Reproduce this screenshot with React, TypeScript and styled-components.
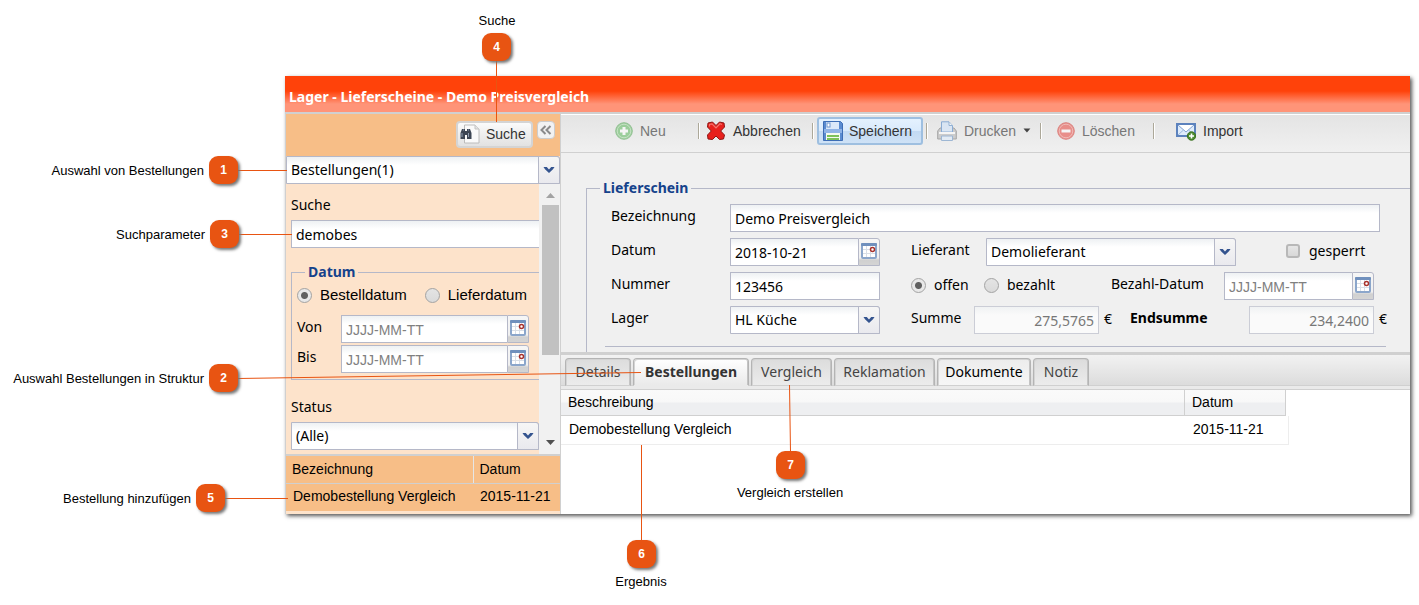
import React from "react";
import styled, { createGlobalStyle, css } from "styled-components";

const ui = `"Noto Sans", "Open Sans", sans-serif`;
const arial = `"Liberation Sans", Arial, sans-serif`;
const line = "#b5b8c8";
const navy = "#15428b";
const accent = "#e85412";

const GlobalStyle = createGlobalStyle`
  *, *::before, *::after { box-sizing: border-box; }
  body { margin: 0; background: #fff; color: #000; font: 14px/18px ${ui}; }
  button, input, select { font: inherit; color: inherit; margin: 0; }
`;

const Page = styled.div`
  position: relative;
  padding: 76px 9px 90px 285px;
`;

const Window = styled.main`
  display: flex;
  flex-direction: column;
  background: #fff;
  box-shadow: 2px 2px 4px #555;
`;

const TitleBar = styled.h1`
  margin: 0;
  height: 38px;
  padding: 11px 4px 0;
  font: bold 14px/20px ${ui};
  color: #fff;
  border-bottom: 2px solid #d0d0d0;
  background: linear-gradient(#ff420a 0, #ff420a 15px, #ff9478 28px, #ff9478 100%);
`;

const Body = styled.div`
  display: flex;
  min-height: 400px;
`;

const Sidebar = styled.aside`
  width: 276px;
  flex: none;
  display: flex;
  flex-direction: column;
  border-left: 1px solid #d0d0d0;
  border-right: 1px solid #d0d0d0;
  background: #fde3cb;
`;

const SideHeader = styled.div`
  height: 42px;
  flex: none;
  display: flex;
  justify-content: flex-end;
  align-items: flex-start;
  gap: 4px;
  padding: 7px 5px 0;
  background: #f7be87;
`;

const SearchButton = styled.button`
  height: 27px;
  width: 77px;
  display: flex;
  align-items: center;
  gap: 6px;
  padding: 0 2px 2px;
  border: 2px solid #d4d4d4;
  border-radius: 4px;
  font: 14px/18px ${arial};
  color: #333;
  background: linear-gradient(#fbfbfb, #eee 50%, #e2e2e2);
`;

const CollapseButton = styled.button`
  width: 18px;
  height: 18px;
  display: grid;
  place-items: center;
  padding: 0;
  border: 1px solid #ccc;
  border-radius: 4px;
  background: #f2f2f2;
`;

const ComboBox = styled.div<{ $w?: string }>`
  display: grid;
  width: ${(p) => p.$w ?? "100%"};
  height: 28px;
  flex: none;
`;

const ComboSelect = styled.select`
  grid-area: 1 / 1;
  appearance: none;
  width: 100%;
  min-width: 0;
  height: 28px;
  padding: 0 24px 0 4px;
  border: 1px solid ${line};
  border-radius: 0 3px 0 0;
  line-height: 18px;
  background: linear-gradient(#eef1f3, #fff 8px);
`;

const ComboArrow = styled.span`
  grid-area: 1 / 1;
  justify-self: end;
  width: 22px;
  height: 28px;
  display: grid;
  place-items: center;
  border: 1px solid ${line};
  border-radius: 0 3px 0 0;
  background: linear-gradient(#f6f6f6, #e9e9ee);
  pointer-events: none;
`;

const ScrollPane = styled.div`
  display: flex;
  height: 272px;
  flex: none;
  border-bottom: 2px solid #d0d0d0;
`;

const SearchForm = styled.form`
  flex: 1;
  min-width: 0;
  overflow: hidden;
  padding: 12px 0 0 5px;
  display: flex;
  flex-direction: column;
`;

const SideLabel = styled.label`
  display: block;
  height: 24px;
  flex: none;
`;

const TextInput = styled.input<{ $w?: string; $right?: boolean }>`
  width: ${(p) => p.$w ?? "100%"};
  min-width: 0;
  height: 28px;
  flex: none;
  padding: 1px 4px 0;
  border: 1px solid ${line};
  outline: none;
  background: linear-gradient(#eef1f3, #fff 8px);
  text-align: ${(p) => (p.$right ? "right" : "left")};
  &::placeholder { color: #808080; opacity: 1; font-family: ${arial}; }
  &:disabled {
    color: #777;
    border-color: #cbcdd6;
    background: linear-gradient(#f0f2f3, #fafafa 8px);
  }
`;

const BleedInput = styled(TextInput)`
  border-right: 0;
`;

const SideFieldset = styled.fieldset`
  margin: 15px 0 0;
  padding: 4px 10px 0 5px;
  min-width: 0;
  height: 117px;
  flex: none;
  border: 1px solid ${line};
  border-right: 0;
`;

const Legend = styled.legend`
  margin-left: 8px;
  padding: 0 3px;
  font-weight: bold;
  line-height: 18px;
  color: ${navy};
`;

const RadioRow = styled.div`
  display: flex;
  gap: 18px;
  height: 30px;
`;

const Choice = styled.label<{ $gap?: number }>`
  display: flex;
  align-items: center;
  gap: ${(p) => p.$gap ?? 8}px;
  height: 20px;
`;

const SideChoice = styled(Choice)`
  font-family: ${arial};
  font-size: 15px;
`;

const Radio = styled.input`
  appearance: none;
  width: 15px;
  height: 15px;
  flex: none;
  border: 1px solid #a3a3a3;
  border-radius: 50%;
  background: linear-gradient(#e4e4e4, #dadada);
  &:checked {
    background: radial-gradient(circle, #606060 0, #606060 3px, #e8e8e8 4px);
  }
`;

const Check = styled.input`
  appearance: none;
  width: 14px;
  height: 14px;
  border: 2px solid #b8b8b8;
  border-radius: 3px;
  background: linear-gradient(#e6e6e6, #d8d8d8);
`;

const SideDateRow = styled.div`
  display: flex;
  height: 30px;
`;

const SideDateLabel = styled.label`
  width: 44px;
  padding-top: 3px;
`;

const DateBox = styled.div<{ $w?: string }>`
  display: flex;
  width: ${(p) => p.$w ?? "auto"};
  flex: ${(p) => (p.$w ? "none" : "1")};
  min-width: 0;
  input { flex: 1; border-right: 0; }
`;

const DateButton = styled.button`
  width: 22px;
  height: 28px;
  flex: none;
  display: grid;
  justify-items: center;
  align-content: start;
  padding: 4px 0 0;
  border: 1px solid ${line};
  border-radius: 0 3px 0 0;
  background: linear-gradient(#f6f6f6 0, #f0f0f0 19px, #d0d0d0 21px, #d4d4d4 100%);
`;

const StatusField = styled.div`
  margin-top: 18px;
`;

const Scrollbar = styled.div`
  width: 21px;
  flex: none;
  display: flex;
  flex-direction: column;
  align-items: center;
  justify-content: space-between;
  padding: 9px 0 9px 1px;
  background: #f1f1f1;
`;

const ScrollThumb = styled.div`
  width: 17px;
  height: 150px;
  margin: 7px 0 auto;
  background: #c1c1c1;
`;

const ResultTable = styled.table`
  width: 100%;
  border-collapse: collapse;
  table-layout: fixed;
  font: 14px/18px ${arial};
  background: #f7be87;
  th, td { text-align: left; font-weight: normal; padding: 0 6px; }
  th { height: 27px; border-bottom: 1px solid #d0d0d0; }
  th:first-child { width: 187px; border-right: 1px solid #e6e6e6; }
  td { height: 28px; padding: 0 7px 2px; }
`;

const Content = styled.section`
  flex: 1;
  min-width: 0;
  display: flex;
  flex-direction: column;
`;

const Toolbar = styled.div`
  height: 39px;
  flex: none;
  display: flex;
  align-items: center;
  padding: 0 0 6px 48px;
  border-top: 1px solid #fff;
  border-bottom: 1px solid #d0d0d0;
  background: linear-gradient(#e4e4e4, #f0f0f0);
`;

const ToolButton = styled.button<{ $w: number; $active?: boolean }>`
  width: ${(p) => p.$w}px;
  height: 28px;
  flex: none;
  display: flex;
  align-items: center;
  gap: 7px;
  padding: 0 5px;
  border: 1px solid transparent;
  border-radius: 3px;
  background: none;
  font: 14px/18px ${arial};
  color: #333;
  white-space: nowrap;
  &:disabled { color: #777; }
  ${(p) =>
    p.$active &&
    css`
      gap: 6px;
      border: 2px solid #9ebfe0;
      padding: 0 4px;
      background: linear-gradient(#e4f1fe 0, #d9eafc 50%, #c3daf3 51%, #cfe2f6 100%);
    `}
`;

const Faded = styled.span`
  display: flex;
  opacity: 0.55;
`;

const Separator = styled.span<{ $before?: number; $after?: number }>`
  width: 2px;
  height: 16px;
  flex: none;
  margin: 0 ${(p) => p.$after ?? 3}px 0 ${(p) => p.$before ?? 3}px;
  border-left: 1px solid #aca899;
  border-right: 1px solid #fff;
`;

const FormPane = styled.form`
  height: 202px;
  flex: none;
  overflow: hidden;
  padding: 26px 0 0 25px;
  border-bottom: 3px solid #d0d0d0;
  background: #f0f0f0;
`;

const MainFieldset = styled.fieldset`
  margin: 0;
  min-width: 0;
  padding: 7px 24px 12px 18px;
  border: 1px solid ${line};
  border-right: 0;
  border-bottom: 0;
`;

const MainLegend = styled(Legend)`
  margin-left: -5px;
`;

const FormRow = styled.div`
  display: flex;
  height: 34px;
  padding: 0 6px;
`;

const FieldLabel = styled.label<{ $w: number; $bold?: boolean }>`
  width: ${(p) => p.$w}px;
  flex: none;
  padding-top: 3px;
  font-weight: ${(p) => (p.$bold ? "bold" : "normal")};
`;

const Gap = styled.span<{ $w: number }>`
  width: ${(p) => p.$w}px;
  flex: none;
`;

const Unit = styled.span<{ $w: number }>`
  width: ${(p) => p.$w}px;
  flex: none;
  padding: 4px 0 0 5px;
`;

const InlineChoice = styled.div<{ $w: number }>`
  width: ${(p) => p.$w}px;
  flex: none;
  padding-top: 3px;
`;

const Divider = styled.hr`
  margin: 6px 0 0;
  border: 0;
  border-top: 1px solid ${line};
`;

const TabStrip = styled.div`
  height: 35px;
  flex: none;
  display: flex;
  gap: 2px;
  padding: 3px 0 0 4px;
  border-bottom: 1px solid #d0d0d0;
  background: linear-gradient(#f2f2f2 0, #dcdcdc 30px, #d0d0d0 30px, #d0d0d0 31px, #eaeaea 31px);
`;

const Tab = styled.button<{ $w: number; $state?: "active" | "hot" }>`
  width: ${(p) => p.$w}px;
  height: 28px;
  padding: 0 0 1px;
  border: 1px solid #b4b4b4;
  border-bottom: 1px solid #d0d0d0;
  border-radius: 4px 4px 0 0;
  color: #444;
  background: linear-gradient(#dcdcdc, #ececec);
  box-shadow: inset -1px 0 #c4c4c4, inset 1px 1px #d4d4d4;
  ${(p) =>
    p.$state === "hot" &&
    css`
      color: #000;
      background: linear-gradient(#ececec, #f6f6f6);
    `}
  ${(p) =>
    p.$state === "active" &&
    css`
      font-weight: bold;
      color: #333;
      border-bottom-color: #eaeaea;
      background: linear-gradient(#fff, #eaeaea);
    `}
`;

const Grid = styled.table`
  width: 728px;
  border-collapse: separate;
  border-spacing: 0;
  table-layout: fixed;
  font: 14px/18px ${arial};
  th, td { text-align: left; font-weight: normal; padding: 0 0 2px 7px; }
  th {
    height: 26px;
    border-right: 1px solid #d0d0d0;
    border-bottom: 1px solid #d0d0d0;
    background: linear-gradient(#fafafa 0, #f8f8f8 12px, #eeeff1 13px, #eeeff1 100%);
  }
  th:first-child { width: 624px; }
  th:nth-child(2) { width: 101px; }
  td { height: 29px; padding-left: 8px; border-bottom: 1px solid #ededed; }
  td:last-child { border-right: 1px solid #ededed; }
`;

const GridFill = styled.td`
  &&& { padding: 0; }
`;

const Lines = styled.svg`
  position: absolute;
  left: 0;
  top: 0;
  pointer-events: none;
`;

const Badge = styled.span<{ $x: number; $y: number }>`
  position: absolute;
  left: ${(p) => p.$x - 15}px;
  top: ${(p) => p.$y - 14}px;
  width: 29px;
  height: 28px;
  border-radius: 9px;
  background: ${accent};
  box-shadow: 2px 2px 3px #777;
  color: #fff;
  font: bold 12px/28px ${arial};
  text-align: center;
`;

const Note = styled.span<{ $x: number; $y: number; $side: "left" | "center" }>`
  position: absolute;
  left: ${(p) => p.$x}px;
  top: ${(p) => p.$y - 8}px;
  transform: translateX(${(p) => (p.$side === "left" ? "-100%" : "-50%")});
  font: 13px/16px ${arial};
  white-space: nowrap;
`;

const Chevron = () => (
  <svg width="12" height="8" viewBox="0 0 12 8" aria-hidden="true">
    <path d="M0.5 1H3.8L6 3.6L8.2 1H11.5L10 3.2L6 7L2 3.2Z" fill="#34548f" />
  </svg>
);

const CalendarIcon = () => (
  <svg width="16" height="16" viewBox="0 0 16 16" aria-hidden="true">
    <rect x="1" y="1" width="14" height="14" rx="1" fill="#fff" stroke="#8ba6cb" strokeWidth="2" />
    <rect x="0" y="0" width="16" height="3" rx="1" fill="#7090bd" />
    <path d="M2 6.5H14M2 10.5H14M5.5 3V14M9.5 3V14" stroke="#d9dfe7" />
    <circle cx="11.5" cy="6.5" r="2" fill="#fff" stroke="#a8322c" strokeWidth="1.5" />
  </svg>
);

const BinocularsIcon = () => (
  <svg width="20" height="20" viewBox="0 0 20 20" aria-hidden="true">
    <path d="M4.5 1H15L19 5V19H4.5Z" fill="#fafafa" stroke="#bcbcbc" />
    <path d="M15 1V5H19" fill="#e4e4e4" stroke="#c4c4c4" />
    <path d="M2 5H5V7H7V5H10L11.5 9V15H7V11H5V15H0.5V9Z" fill="#3d4654" />
    <path d="M2 9V13M8.5 9V13M3 6H4M8 6H9" stroke="#8f9cb0" />
  </svg>
);

const CollapseIcon = () => (
  <svg width="12" height="10" viewBox="0 0 12 10" fill="none" stroke="#8a8a8a" strokeWidth="2" aria-hidden="true">
    <path d="M5.5 1L1.5 5L5.5 9M10.5 1L6.5 5L10.5 9" />
  </svg>
);

const AddIcon = () => (
  <svg width="18" height="18" viewBox="0 0 18 18" aria-hidden="true">
    <circle cx="9" cy="9" r="8.3" fill="#5cb85c" stroke="#4c9f4e" />
    <circle cx="9" cy="9" r="6.8" fill="none" stroke="#a9dba7" />
    <path d="M9 5V13M5 9H13" stroke="#fff" strokeWidth="3" />
  </svg>
);

const CancelIcon = () => (
  <svg width="20" height="20" viewBox="0 0 20 20" aria-hidden="true">
    <path
      d="M2 2L6.5 1L10 4.5L13.5 1L18 2L18.5 6L14.7 10L18.5 14L17.5 18L13.5 18.5L10 15L6.5 18.5L2 18L1.5 14L5.3 10L1.5 6Z"
      fill="#e8201c"
      stroke="#8e1514"
      strokeLinejoin="round"
    />
    <path d="M3.5 5.5V3.5L6 2.8L10 6.8L14 2.8L16 3.5" fill="none" stroke="#f4756d" strokeWidth="1.2" />
  </svg>
);

const SaveIcon = () => (
  <svg width="20" height="20" viewBox="0 0 20 20" aria-hidden="true">
    <path d="M0.5 0.5H17.5L19.5 2.5V19.5H0.5Z" fill="#5a8bd0" stroke="#3d6db5" />
    <rect x="3" y="1" width="13" height="8" fill="#dce9f9" />
    <rect x="4" y="2" width="3" height="4" fill="#fff" stroke="#6f97d0" />
    <rect x="1" y="8" width="18" height="4" fill="#8fb3e6" />
    <rect x="3" y="12" width="14" height="7" fill="#f4faf0" />
    <path d="M4 15H16M4 18H16" stroke="#7cc15a" strokeWidth="2" />
  </svg>
);

const PrintIcon = () => (
  <svg width="20" height="20" viewBox="0 0 20 20" aria-hidden="true">
    <path d="M0.7 10L3 7H17L19.3 10V18H0.7Z" fill="#b4b4b4" stroke="#6e6e6e" />
    <path d="M4.5 11V0.8H12L15.5 4.5V11Z" fill="#cfe4fc" stroke="#3f7cc4" />
    <path d="M12 1V4.5H15.5" fill="#fff" stroke="#4f86c4" />
    <path d="M2 12H18" stroke="#fff" strokeWidth="2" />
    <path d="M4.5 15H15.5V19.5H4.5Z" fill="#dcebfd" stroke="#5f8cc0" />
  </svg>
);

const DeleteIcon = () => (
  <svg width="18" height="18" viewBox="0 0 18 18" aria-hidden="true">
    <circle cx="9" cy="9" r="8.3" fill="#e8443c" stroke="#d0332c" />
    <circle cx="9" cy="9" r="6.8" fill="none" stroke="#f4958f" />
    <path d="M4.5 9H13.5" stroke="#fff" strokeWidth="3" />
  </svg>
);

const ImportIcon = () => (
  <svg width="20" height="20" viewBox="0 0 20 20" aria-hidden="true">
    <rect x="1" y="3" width="18" height="12" fill="#dfecfb" stroke="#5c82bd" strokeWidth="2" />
    <path d="M2 4L10 11L18 4" fill="#fff" stroke="#7fa0d0" />
    <path d="M2 14L7.5 9M18 14L12.5 9" stroke="#9db8de" />
    <circle cx="15.5" cy="15" r="4.2" fill="#4c8b2f" stroke="#39701f" />
    <path d="M15.5 12.5V17.5M13 15H18" stroke="#fff" strokeWidth="1.6" />
  </svg>
);

const Caret = () => (
  <svg width="8" height="5" viewBox="0 0 8 5" aria-hidden="true">
    <path d="M0.5 0.5H7.5L4 4.5Z" fill="#444" />
  </svg>
);

const ScrollArrow = ({ up }: { up?: boolean }) => (
  <svg width="9" height="5" viewBox="0 0 9 5" aria-hidden="true">
    <path d={up ? "M0 5H9L4.5 0Z" : "M0 0H9L4.5 5Z"} fill={up ? "#a3a3a3" : "#505050"} />
  </svg>
);

const Combo = ({ id, value, w, label }: { id: string; value: string; w?: string; label?: string }) => (
  <ComboBox $w={w}>
    <ComboSelect id={id} aria-label={label} defaultValue={value}>
      <option>{value}</option>
    </ComboSelect>
    <ComboArrow>
      <Chevron />
    </ComboArrow>
  </ComboBox>
);

const DateField = ({ id, value, w }: { id: string; value?: string; w?: string }) => (
  <DateBox $w={w}>
    <TextInput id={id} type="text" defaultValue={value} placeholder="JJJJ-MM-TT" />
    <DateButton type="button" aria-label="Kalender">
      <CalendarIcon />
    </DateButton>
  </DateBox>
);

type CalloutData = { n: number; text: string; x: number; y: number; tx: number; ty: number; side: "left" | "center" };

const callouts: CalloutData[] = [
  { n: 1, text: "Auswahl von Bestellungen", x: 224, y: 170, tx: 204, ty: 171, side: "left" },
  { n: 2, text: "Auswahl Bestellungen in Struktur", x: 224, y: 378, tx: 204, ty: 379, side: "left" },
  { n: 3, text: "Suchparameter", x: 225, y: 234, tx: 205, ty: 235, side: "left" },
  { n: 4, text: "Suche", x: 497, y: 47, tx: 497, ty: 21, side: "center" },
  { n: 5, text: "Bestellung hinzufügen", x: 211, y: 498, tx: 191, ty: 499, side: "left" },
  { n: 6, text: "Ergebnis", x: 642, y: 554, tx: 641, ty: 582, side: "center" },
  { n: 7, text: "Vergleich erstellen", x: 791, y: 465, tx: 790, ty: 493, side: "center" },
];

export default function App() {
  return (
    <Page>
      <GlobalStyle />
      <Window>
        <TitleBar>Lager - Lieferscheine - Demo Preisvergleich</TitleBar>
        <Body>
          <Sidebar>
            <SideHeader>
              <SearchButton type="button">
                <BinocularsIcon />
                Suche
              </SearchButton>
              <CollapseButton type="button" aria-label="Einklappen">
                <CollapseIcon />
              </CollapseButton>
            </SideHeader>
            <Combo id="list" value="Bestellungen(1)" label="Liste" />
            <ScrollPane>
              <SearchForm>
                <SideLabel htmlFor="query">Suche</SideLabel>
                <BleedInput id="query" type="text" defaultValue="demobes" />
                <SideFieldset>
                  <Legend>Datum</Legend>
                  <RadioRow>
                    <SideChoice>
                      <Radio type="radio" name="kind" defaultChecked />
                      Bestelldatum
                    </SideChoice>
                    <SideChoice>
                      <Radio type="radio" name="kind" />
                      Lieferdatum
                    </SideChoice>
                  </RadioRow>
                  <SideDateRow>
                    <SideDateLabel htmlFor="from">Von</SideDateLabel>
                    <DateField id="from" />
                  </SideDateRow>
                  <SideDateRow>
                    <SideDateLabel htmlFor="to">Bis</SideDateLabel>
                    <DateField id="to" />
                  </SideDateRow>
                </SideFieldset>
                <StatusField>
                  <SideLabel htmlFor="status">Status</SideLabel>
                  <Combo id="status" value="(Alle)" />
                </StatusField>
              </SearchForm>
              <Scrollbar>
                <ScrollArrow up />
                <ScrollThumb />
                <ScrollArrow />
              </Scrollbar>
            </ScrollPane>
            <ResultTable>
              <thead>
                <tr>
                  <th>Bezeichnung</th>
                  <th>Datum</th>
                </tr>
              </thead>
              <tbody>
                <tr>
                  <td>Demobestellung Vergleich</td>
                  <td>2015-11-21</td>
                </tr>
              </tbody>
            </ResultTable>
          </Sidebar>
          <Content>
            <Toolbar>
              <ToolButton type="button" $w={86} disabled>
                <Faded><AddIcon /></Faded>
                Neu
              </ToolButton>
              <Separator $after={0} />
              <ToolButton type="button" $w={109}>
                <CancelIcon />
                Abbrechen
              </ToolButton>
              <Separator />
              <ToolButton type="button" $w={106} $active>
                <SaveIcon />
                Speichern
              </ToolButton>
              <Separator />
              <ToolButton type="button" $w={106} disabled>
                <Faded><PrintIcon /></Faded>
                Drucken
                <Caret />
              </ToolButton>
              <Separator $after={9} />
              <ToolButton type="button" $w={96} disabled>
                <Faded><DeleteIcon /></Faded>
                Löschen
              </ToolButton>
              <Separator $before={6} $after={15} />
              <ToolButton type="button" $w={80}>
                <ImportIcon />
                Import
              </ToolButton>
            </Toolbar>
            <FormPane>
              <MainFieldset>
                <MainLegend>Lieferschein</MainLegend>
                <FormRow>
                  <FieldLabel htmlFor="name" $w={119}>Bezeichnung</FieldLabel>
                  <TextInput id="name" type="text" defaultValue="Demo Preisvergleich" $w="calc(100% - 119px)" />
                </FormRow>
                <FormRow>
                  <FieldLabel htmlFor="date" $w={119}>Datum</FieldLabel>
                  <DateField id="date" value="2018-10-21" w="150px" />
                  <Gap $w={31} />
                  <FieldLabel htmlFor="supplier" $w={75}>Lieferant</FieldLabel>
                  <Combo id="supplier" value="Demolieferant" w="250px" />
                  <Gap $w={50} />
                  <InlineChoice $w={90}>
                    <Choice $gap={9}>
                      <Check type="checkbox" />
                      gesperrt
                    </Choice>
                  </InlineChoice>
                </FormRow>
                <FormRow>
                  <FieldLabel htmlFor="number" $w={119}>Nummer</FieldLabel>
                  <TextInput id="number" type="text" defaultValue="123456" $w="150px" />
                  <Gap $w={31} />
                  <InlineChoice $w={73}>
                    <Choice>
                      <Radio type="radio" name="paid" defaultChecked />
                      offen
                    </Choice>
                  </InlineChoice>
                  <InlineChoice $w={127}>
                    <Choice>
                      <Radio type="radio" name="paid" />
                      bezahlt
                    </Choice>
                  </InlineChoice>
                  <FieldLabel htmlFor="paydate" $w={113}>Bezahl-Datum</FieldLabel>
                  <DateField id="paydate" w="150px" />
                </FormRow>
                <FormRow>
                  <FieldLabel htmlFor="store" $w={119}>Lager</FieldLabel>
                  <Combo id="store" value="HL Küche" w="150px" />
                  <Gap $w={31} />
                  <FieldLabel htmlFor="sum" $w={63}>Summe</FieldLabel>
                  <TextInput id="sum" type="text" defaultValue="275,5765" disabled $right $w="125px" />
                  <Unit $w={31}>€</Unit>
                  <FieldLabel htmlFor="total" $w={119} $bold>Endsumme</FieldLabel>
                  <TextInput id="total" type="text" defaultValue="234,2400" disabled $right $w="125px" />
                  <Unit $w={14}>€</Unit>
                </FormRow>
                <Divider />
              </MainFieldset>
            </FormPane>
            <TabStrip role="tablist">
              <Tab type="button" role="tab" $w={66}>Details</Tab>
              <Tab type="button" role="tab" aria-selected="true" $w={116} $state="active">Bestellungen</Tab>
              <Tab type="button" role="tab" $w={81}>Vergleich</Tab>
              <Tab type="button" role="tab" $w={101}>Reklamation</Tab>
              <Tab type="button" role="tab" $w={94} $state="hot">Dokumente</Tab>
              <Tab type="button" role="tab" $w={56}>Notiz</Tab>
            </TabStrip>
            <Grid>
              <thead>
                <tr>
                  <th>Beschreibung</th>
                  <th>Datum</th>
                </tr>
              </thead>
              <tbody>
                <tr>
                  <td>Demobestellung Vergleich</td>
                  <td>2015-11-21</td>
                  <GridFill />
                </tr>
              </tbody>
            </Grid>
          </Content>
        </Body>
      </Window>
      <Lines width="800" height="560" viewBox="0 0 800 560" stroke={accent} strokeWidth="1" aria-hidden="true">
        <path d="M496.5 60V122M238 170.5H287M238 234.5H292M225 498.5H288M641.5 445V541M789.5 385L790.5 452" fill="none" />
        <path d="M238 378.5L641 372.5" />
      </Lines>
      {callouts.map((c) => (
        <React.Fragment key={c.n}>
          <Badge $x={c.x} $y={c.y}>{c.n}</Badge>
          <Note $x={c.tx} $y={c.ty} $side={c.side}>{c.text}</Note>
        </React.Fragment>
      ))}
    </Page>
  );
}
